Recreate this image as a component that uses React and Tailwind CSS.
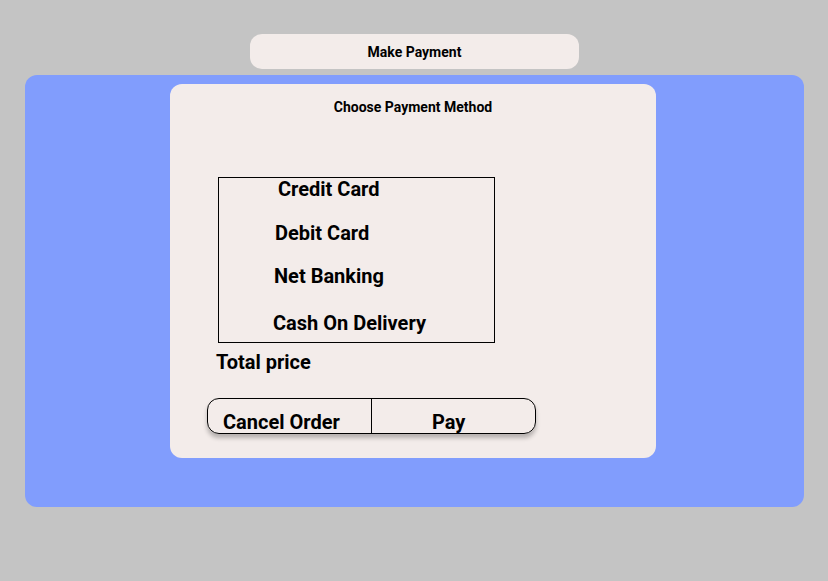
export default function App() {
  return (
    <div className="min-h-[581px] w-[828px] bg-[#c4c4c4] pt-[34px] font-['Roboto',sans-serif] text-black">
      {/* header bar */}
      <div className="ml-[250px] flex h-[35px] w-[329px] items-center justify-center rounded-[12px] bg-[#f3ecea] pt-[1px] text-[14px] font-bold">
        Make Payment
      </div>

      {/* blue panel */}
      <div className="ml-[25px] mt-[6px] h-[432px] w-[779px] rounded-[12px] bg-[#819dfd] pl-[145px] pt-[9px]">
        <div className="h-[374px] w-[486px] rounded-[12px] bg-[#f3ecea] pt-[15px]">
          <h2 className="text-center text-[14px] font-bold leading-[16px]">Choose Payment Method</h2>

          <div className="ml-[48px] mt-[62px] h-[166px] w-[277px] border border-black text-[20px] font-bold leading-[22px]">
            <div className="pl-[59px]">Credit Card</div>
            <div className="mt-[22px] pl-[56px]">Debit Card</div>
            <div className="mt-[21px] pl-[55px]">Net Banking</div>
            <div className="mt-[25px] pl-[54px]">Cash On Delivery</div>
          </div>

          <div className="ml-[46px] mt-[8px] text-[20px] font-bold leading-[22px]">Total price</div>

          <div className="ml-[37px] mt-[25px] flex h-[36px] w-[329px] overflow-hidden rounded-[12px] border border-black text-[20px] font-bold leading-[22px] shadow-[0_4px_4px_rgba(0,0,0,0.25)]">
            <div className="w-[164px] border-r border-black pl-[15px] pt-[12px]">Cancel Order</div>
            <div className="flex-1 pl-[60px] pt-[12px]">Pay</div>
          </div>
        </div>
      </div>
    </div>
  );
}
